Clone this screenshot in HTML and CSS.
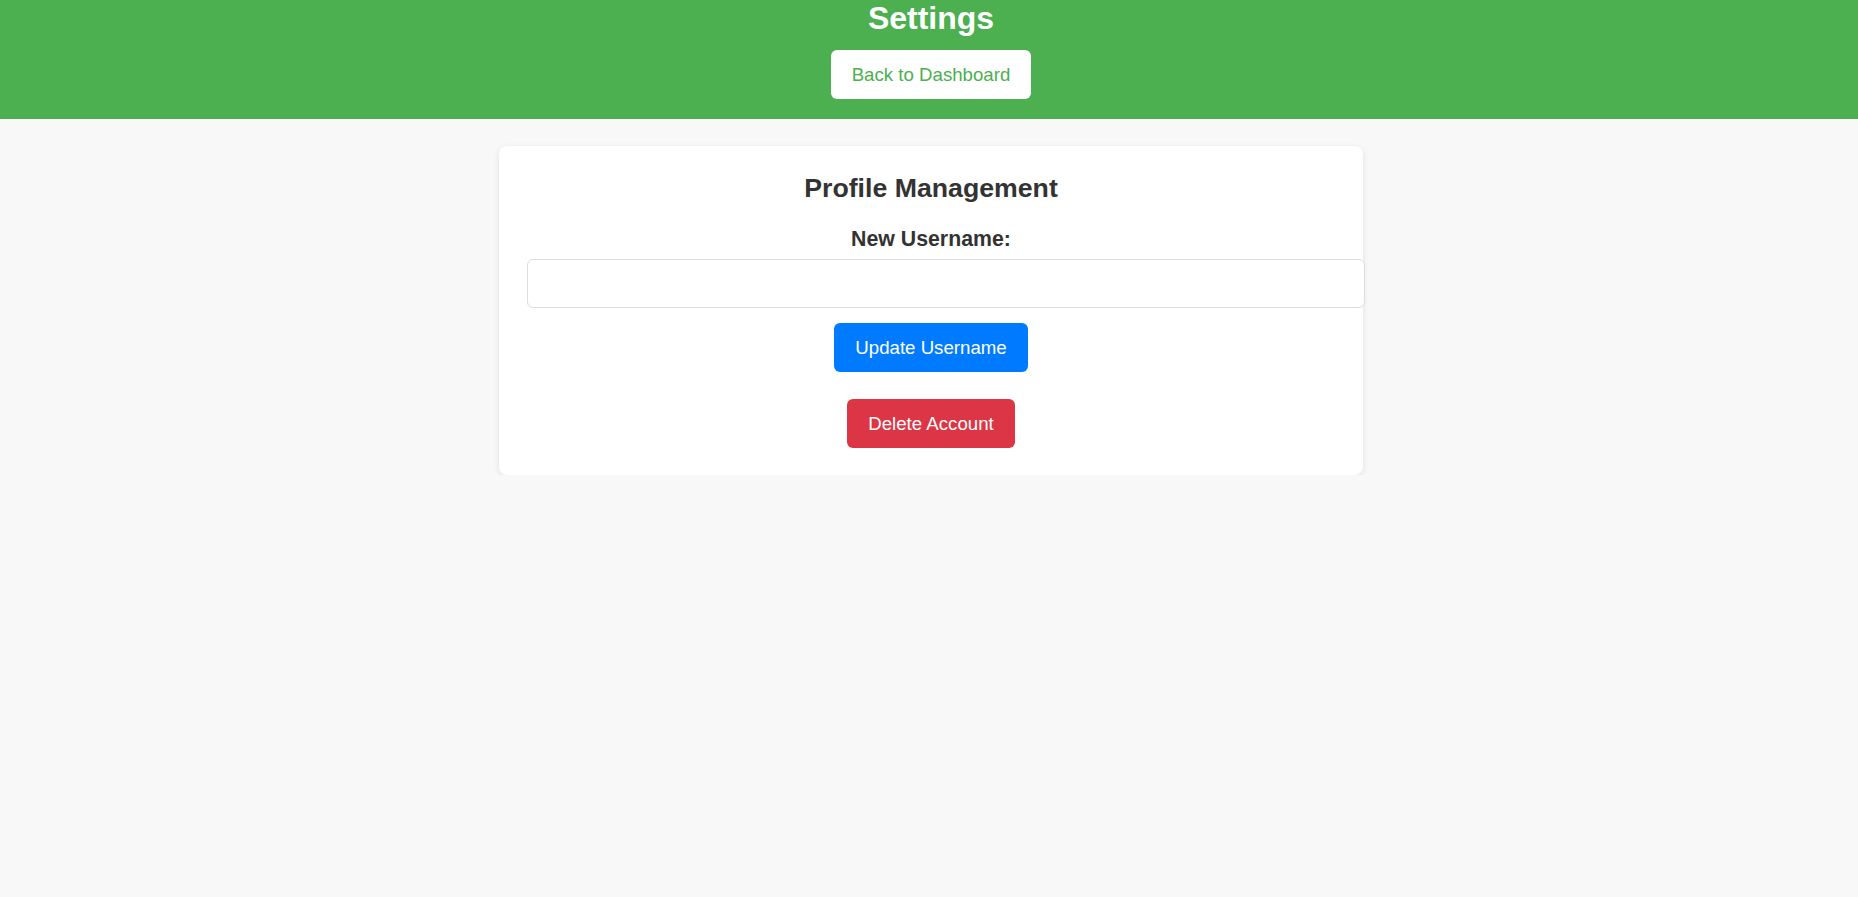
FILE: index.html
```html
<!DOCTYPE html>
<html lang="en">
<head>
<meta charset="utf-8">
<title>Settings</title>
<link rel="stylesheet" href="styles.css">
</head>
<body>
  <header class="topbar">
    <h1 class="topbar-title">Settings</h1>
    <button class="btn btn-back">Back to Dashboard</button>
  </header>
  <main class="main">
    <section class="card">
      <h2 class="card-title">Profile Management</h2>
      <label class="field-label" for="username">New Username:</label>
      <input class="field-input" id="username" type="text">
      <button class="btn btn-primary">Update Username</button>
      <button class="btn btn-danger">Delete Account</button>
    </section>
  </main>
</body>
</html>
```
FILE: styles.css
```css
html, body {
  margin: 0;
  padding: 0;
}
body {
  background: #f8f8f8;
  font-family: "Liberation Sans", Arial, sans-serif;
  color: #333;
}
.topbar {
  background: #4caf50;
  color: #fff;
  text-align: center;
  padding: 0 0 20px 4px;
}
.topbar-title {
  margin: 0 0 13px;
  font-size: 32px;
  line-height: 37px;
  font-weight: bold;
}
.btn {
  font-family: "Liberation Sans", Arial, sans-serif;
  font-size: 18.67px;
  line-height: 21px;
  padding: 14px 21px;
  border: none;
  border-radius: 6px;
  cursor: pointer;
  display: inline-block;
}
.btn-back {
  background: #fff;
  color: #4caf50;
}
.main {
  padding: 27px 0 0 4px;
  display: flex;
  justify-content: center;
}
.card {
  box-sizing: border-box;
  width: 864px;
  background: #fff;
  border-radius: 8px;
  box-shadow: 0 2px 6px rgba(0, 0, 0, 0.1);
  padding: 27px 28px 27px;
  text-align: center;
}
.card-title {
  margin: 0 0 23px;
  font-size: 26.7px;
  line-height: 31px;
  font-weight: bold;
  color: #333;
}
.field-label {
  display: block;
  font-size: 21.3px;
  line-height: 24px;
  font-weight: bold;
  color: #333;
  margin-bottom: 8px;
}
.field-input {
  display: block;
  width: 100%;
  height: 19px;
  padding: 14px;
  border: 1px solid #ddd;
  border-radius: 6px;
  font-size: 16px;
  margin: 0 0 15px;
  background: #fff;
}
.btn-primary {
  background: #007bff;
  color: #fff;
}
.btn-danger {
  background: #dc3545;
  color: #fff;
  margin-top: 27px;
}
.card .btn {
  display: block;
  margin-left: auto;
  margin-right: auto;
}
```
